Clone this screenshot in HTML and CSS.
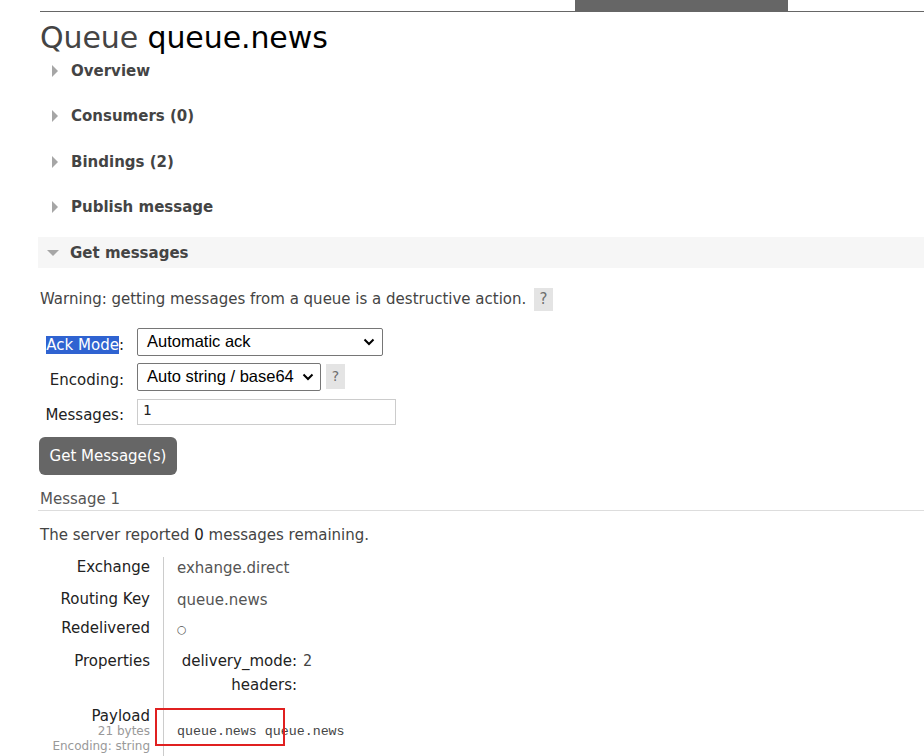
FILE: index.html
```html
<!DOCTYPE html>
<html>
<head>
<meta charset="utf-8">
<link rel="stylesheet" href="styles.css">
</head>
<body>
<div class="topbar"><div class="tab"></div></div>
<div class="main">
  <h1 class="title"><span class="kind">Queue</span> queue.news</h1>
  <div class="section"><span class="tri-right"></span><span class="sec-title">Overview</span></div>
  <div class="section"><span class="tri-right"></span><span class="sec-title">Consumers (0)</span></div>
  <div class="section"><span class="tri-right"></span><span class="sec-title">Bindings (2)</span></div>
  <div class="section"><span class="tri-right"></span><span class="sec-title">Publish message</span></div>
  <div class="section open"><span class="tri-down"></span><span class="sec-title">Get messages</span></div>

  <p class="warning">Warning: getting messages from a queue is a destructive action. <span class="help">?</span></p>

  <div class="form">
    <div class="frow">
      <label class="flabel"><span class="sel">Ack Mode</span>:</label>
      <div class="select wide">Automatic ack<svg class="chev" viewBox="0 0 12 8" width="12" height="8"><path d="M1.5 1.5 L6 6 L10.5 1.5" fill="none" stroke="#000" stroke-width="2"/></svg></div>
    </div>
    <div class="frow">
      <label class="flabel">Encoding:</label>
      <div class="select narrow">Auto string / base64<svg class="chev" viewBox="0 0 12 8" width="12" height="8"><path d="M1.5 1.5 L6 6 L10.5 1.5" fill="none" stroke="#000" stroke-width="2"/></svg></div>
      <span class="help help2">?</span>
    </div>
    <div class="frow">
      <label class="flabel">Messages:</label>
      <div class="input">1</div>
    </div>
  </div>
  <button class="btn">Get Message(s)</button>

  <div class="msghead">Message 1</div>
  <p class="remaining">The server reported <span class="num">0</span> messages remaining.</p>

  <div class="details">
    <div class="drow r1"><div class="dk">Exchange</div><div class="dv">exhange.direct</div></div>
    <div class="drow r2"><div class="dk">Routing Key</div><div class="dv">queue.news</div></div>
    <div class="drow r3"><div class="dk">Redelivered</div><div class="dv circ">○</div></div>
    <div class="drow r4"><div class="dk">Properties</div>
      <div class="dv props">
        <div class="prow"><span class="pk">delivery_mode:</span><span class="pv">2</span></div>
        <div class="prow"><span class="pk">headers:</span><span class="pv"></span></div>
      </div>
    </div>
    <div class="drow r5"><div class="dk"><div class="plabel">Payload</div><div class="small">21 bytes</div><div class="small">Encoding: string</div></div>
      <div class="dv payload"><pre>queue.news queue.news</pre><div class="redbox"></div></div>
    </div>
  </div>
</div>
</body>
</html>
```

FILE: styles.css
```css
html, body {
  margin: 0;
  padding: 0;
  background: #fff;
}
body {
  font-family: "DejaVu Sans", Verdana, sans-serif;
  color: #444;
  overflow: hidden;
  height: 756px;
}
.topbar {
  margin-left: 40px;
  height: 11px;
  border-bottom: 1px solid #666;
  display: flex;
}
.tab {
  margin-left: 535px;
  width: 213px;
  height: 11px;
  background: #666;
}
.main {
  padding-left: 38px;
}
.title {
  margin: 9px 0 0 2px;
  font-weight: normal;
  font-size: 30px;
  line-height: 34px;
  color: #000;
  letter-spacing: -0.1px;
}
.title .kind {
  color: #444;
}
.section {
  height: 31px;
  margin-bottom: 14.5px;
  display: flex;
  align-items: center;
  font-weight: bold;
  font-size: 15px;
  color: #444;
}
.section.open {
  background: #f6f6f6;
  margin-bottom: 0;
}
.tri-right {
  width: 0;
  height: 0;
  border-left: 6px solid #a6a6a6;
  border-top: 6px solid transparent;
  border-bottom: 6px solid transparent;
  margin-left: 14px;
  margin-right: 13px;
}
.tri-down {
  width: 0;
  height: 0;
  border-top: 6px solid #a6a6a6;
  border-left: 6.5px solid transparent;
  border-right: 6.5px solid transparent;
  margin-left: 9px;
  margin-right: 11px;
}
.warning {
  margin: 20px 0 0 2px;
  font-size: 15px;
  line-height: 22px;
  color: #444;
}
.help {
  display: inline-block;
  background: #e4e4e4;
  color: #6e6e6e;
  width: 19px;
  text-align: center;
  height: 23px;
  line-height: 23px;
  margin-left: 3px;
  vertical-align: middle;
}
.form {
  margin-top: 17px;
  display: flex;
  flex-direction: column;
  gap: 8px;
}
.frow {
  display: flex;
  align-items: center;
  height: 27px;
}
.flabel {
  width: 86px;
  text-align: right;
  font-size: 15px;
  color: #222;
  margin-right: 13px;
  padding-top: 7px;
  white-space: nowrap;
}
.sel {
  background: #2f63d1;
  color: #fff;
}
.select {
  box-sizing: border-box;
  height: 28px;
  border: 1px solid #767676;
  border-radius: 2px;
  font-family: "Liberation Sans", Arial, sans-serif;
  font-size: 16.5px;
  color: #000;
  display: flex;
  align-items: center;
  justify-content: space-between;
  padding: 0 7px 0 9px;
}
.select.wide { width: 246px; }
.select.narrow { width: 184px; padding-left: 9px; padding-right: 6px; }
.help2 {
  margin-left: 5px;
  height: 25px;
  line-height: 25px;
  font-size: 14px;
}
.input {
  box-sizing: border-box;
  width: 259px;
  height: 26px;
  border: 1px solid #ccc;
  font-family: "DejaVu Sans Mono", monospace;
  font-size: 14px;
  color: #222;
  padding: 0 5px;
  line-height: 20px;
}
.btn {
  display: block;
  margin: 12px 0 0 1px;
  background: #666;
  color: #fff;
  border: 0;
  border-radius: 6px;
  font-family: "DejaVu Sans", Verdana, sans-serif;
  font-size: 15px;
  height: 38px;
  width: 138px;
  padding: 0;
}
.msghead {
  margin-top: 14px;
  font-size: 15px;
  color: #555;
  line-height: 20px;
  padding-bottom: 1px;
  border-bottom: 1px solid #ddd;
  padding-left: 2px;
}
.remaining {
  margin: 13px 0 0 2px;
  font-size: 15px;
  line-height: 22px;
  color: #444;
}
.remaining .num { color: #222; }
.details {
  margin-top: 11px;
  display: flex;
  flex-direction: column;
}
.drow {
  display: flex;
}
.dk {
  box-sizing: border-box;
  width: 126px;
  text-align: right;
  padding-right: 13px;
  border-right: 1px solid #ccc;
  font-size: 15px;
  color: #222;
  line-height: 20px;
  flex: none;
}
.dv {
  box-sizing: border-box;
  padding-left: 13px;
  font-size: 15px;
  color: #555;
  line-height: 20px;
  padding-top: 1px;
}
.r1 .dk, .r1 .dv { height: 32px; }
.r2 .dk, .r2 .dv { height: 29px; }
.r3 .dk, .r3 .dv { height: 33px; }
.r4 .dk, .r4 .dv { height: 55px; }
.circ { font-size: 11px; padding-top: 2px; line-height: 20px; }
.r4 .dv { padding-left: 16px; padding-top: 0; }
.props .prow {
  display: flex;
  height: 24px;
  align-items: center;
  margin-top: -2px;
}
.props .prow + .prow { margin-top: 0; }
.pk {
  width: 117px;
  text-align: right;
  color: #222;
}
.pv {
  margin-left: 6px;
  font-family: "DejaVu Sans Mono", monospace;
  color: #444;
}
.r5 .dk { height: 60px; }
.plabel {
  line-height: 16px;
  padding-top: 2px;
}
.small {
  font-size: 12px;
  line-height: 15px;
  color: #999;
}
.payload {
  position: relative;
  padding-top: 16px;
}
.payload pre {
  margin: 0;
  font-family: "Liberation Mono", "DejaVu Sans Mono", monospace;
  font-size: 13.3px;
  line-height: 20px;
  color: #444;
}
.redbox {
  position: absolute;
  left: -9px;
  top: 2px;
  width: 126px;
  height: 34px;
  border: 2px solid #e02020;
}
```
